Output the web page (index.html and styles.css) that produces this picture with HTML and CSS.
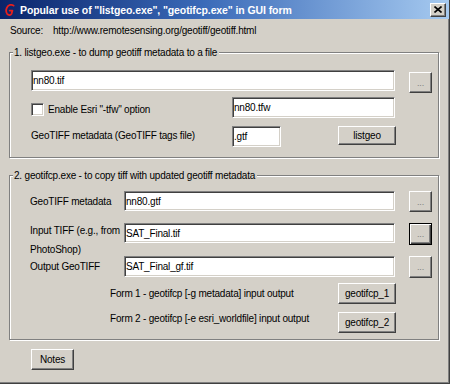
FILE: index.html
```html
<!DOCTYPE html>
<html lang="en">
<head>
  <meta charset="UTF-8">
  <title>Popular use of listgeo.exe, geotifcp.exe in GUI form</title>
  <link rel="stylesheet" href="styles.css">
</head>
<body>
  <div class="window">
    <div class="titlebar">
      <svg class="app-icon" viewBox="0 0 12 14">
        <path d="M10.5 2.2 C8.5 0.6 4.6 1.2 3 4.6 C1.6 7.6 2.4 11.6 5.2 12.4 C6.6 12.8 7.6 12.2 8.2 11.2 L9.2 7.6 L6.2 7.6" fill="none" stroke="#e8201c" stroke-width="2" stroke-linecap="round" stroke-linejoin="round"/>
      </svg>
      <span class="title">Popular use of "listgeo.exe", "geotifcp.exe" in GUI form</span>
      <button class="close-button">
        <svg class="close-icon" viewBox="0 0 8 7">
          <path d="M0.5 0.5 L7.5 6.5 M7.5 0.5 L0.5 6.5" stroke="#000" stroke-width="1.6"/>
        </svg>
      </button>
    </div>

    <div class="content">
      <div class="source">
        <span class="source-label">Source:</span>
        <span>http://www.remotesensing.org/geotiff/geotiff.html</span>
      </div>

      <!-- listgeo -->
      <fieldset class="group group-listgeo">
        <legend>1. listgeo.exe - to dump geotiff metadata to a file</legend>
        <div class="row row-file">
          <input class="field field-tif" type="text" value="nn80.tif">
          <button class="btn btn-browse">...</button>
        </div>
        <div class="row row-tfw">
          <label class="check">
            <span class="check-box"></span>
            <span>Enable Esri "-tfw" option</span>
          </label>
          <input class="field field-tfw" type="text" value="nn80.tfw">
        </div>
        <div class="row row-gtf">
          <span class="row-label">GeoTIFF metadata (GeoTIFF tags file)</span>
          <input class="field field-gtf" type="text" value=".gtf">
          <button class="btn btn-run">listgeo</button>
        </div>
      </fieldset>

      <!-- geotifcp -->
      <fieldset class="group group-geotifcp">
        <legend>2. geotifcp.exe - to copy tiff with updated geotiff metadata</legend>
        <div class="row row-path">
          <span class="path-label">GeoTIFF metadata</span>
          <input class="field field-path" type="text" value="nn80.gtf">
          <button class="btn btn-browse">...</button>
        </div>
        <div class="row row-path row-input">
          <span class="path-label path-label-two">Input TIFF (e.g., from PhotoShop)</span>
          <input class="field field-path" type="text" value="SAT_Final.tif">
          <button class="btn btn-browse btn-focus">...</button>
        </div>
        <div class="row row-path row-output">
          <span class="path-label">Output GeoTIFF</span>
          <input class="field field-path" type="text" value="SAT_Final_gf.tif">
          <button class="btn btn-browse">...</button>
        </div>
        <div class="row row-form">
          <span class="form-label">Form 1 - geotifcp [-g metadata] input output</span>
          <button class="btn btn-run">geotifcp_1</button>
        </div>
        <div class="row row-form row-form-last">
          <span class="form-label form-label-high">Form 2 - geotifcp [-e esri_worldfile] input output</span>
          <button class="btn btn-run">geotifcp_2</button>
        </div>
      </fieldset>

      <button class="btn btn-notes">Notes</button>
    </div>
  </div>
</body>
</html>
```

FILE: styles.css
```css
:root {
  --face: #d4d0c8;
  --shadow: #808080;
  --dark: #404040;
  --light: #ffffff;
}

* {
  box-sizing: border-box;
}

body {
  margin: 0;
  padding: 0;
  font-family: "Liberation Sans", Arial, sans-serif;
  font-size: 10px;
  letter-spacing: -0.2px;
  color: #000;
  background-color: var(--face);
}

.window {
  width: 450px;
  height: 384px;
  display: flex;
  flex-direction: column;
  background-color: var(--face);
  border-right: 1px solid var(--dark);
  border-bottom: 1px solid var(--dark);
  box-shadow: inset -1px -1px 0 var(--shadow);
  overflow: hidden;
}

/* Title bar */
.titlebar {
  height: 19px;
  flex-shrink: 0;
  display: flex;
  align-items: center;
  padding: 0 3px 0 4px;
  background: linear-gradient(to right, #0a246a 0%, #3a6ab8 45%, #a6caf0 100%);
}

.app-icon {
  width: 11px;
  height: 14px;
  flex-shrink: 0;
}

.title {
  margin-left: 5px;
  flex: 1;
  color: #fff;
  font-weight: bold;
  font-size: 10.5px;
  letter-spacing: -0.1px;
  white-space: nowrap;
}

.close-button {
  width: 16px;
  height: 14px;
  padding: 0;
  display: flex;
  align-items: center;
  justify-content: center;
  background-color: var(--face);
  border: 1px solid;
  border-color: var(--light) var(--dark) var(--dark) var(--light);
  box-shadow: inset -1px -1px 0 var(--shadow);
}

.close-icon {
  width: 8px;
  height: 7px;
}

/* Content */
.content {
  padding: 5px 0 0 0;
}

.source {
  height: 13px;
  line-height: 13px;
  padding-left: 10px;
  display: flex;
}

.source-label {
  width: 43px;
}

/* Group boxes */
.group {
  margin: 9px 0 0 9px;
  padding: 0;
  width: 430px;
  min-width: 0;
  border: 1px solid var(--shadow);
  box-shadow: 1px 1px 0 var(--light), inset 1px 1px 0 var(--light);
}

.group legend {
  margin-left: 3px;
  padding: 0 2px 0 1px;
  height: 13px;
  line-height: 13px;
  background-color: var(--face);
}

.group-listgeo {
  padding-top: 11px;
  padding-bottom: 10px;
}

.group-geotifcp {
  margin-top: 11px;
  padding-top: 9px;
  padding-bottom: 6px;
}

.row {
  display: flex;
  align-items: flex-start;
  padding-left: 21px;
}

/* Sunken text field */
.field {
  height: 21px;
  margin: 0;
  padding: 0 0 0 1px;
  font-family: inherit;
  font-size: 10px;
  letter-spacing: -0.2px;
  color: #000;
  background-color: #fff;
  border: 1px solid;
  border-color: var(--shadow) var(--light) var(--light) var(--shadow);
  box-shadow: inset 1px 1px 0 var(--dark), inset -1px -1px 0 var(--face);
  outline: none;
}

/* Raised push button */
.btn {
  margin: 0;
  padding: 0;
  font-family: inherit;
  font-size: 10px;
  letter-spacing: -0.2px;
  color: #000;
  background-color: var(--face);
  border: 1px solid;
  border-color: var(--light) var(--dark) var(--dark) var(--light);
  box-shadow: inset -1px -1px 0 var(--shadow);
}

.btn-browse {
  width: 23px;
  height: 21px;
  margin-left: 14px;
  margin-top: 2px;
  color: #808080;
  font-size: 9px;
}

.btn-focus {
  border: 1px solid #000;
  box-shadow: inset 1px 1px 0 var(--light), inset -1px -1px 0 var(--dark), inset -2px -2px 0 var(--shadow);
  height: 22px;
}

.btn-run {
  width: 58px;
  height: 20px;
}

/* listgeo rows */
.row-file {
  height: 27px;
}

.field-tif {
  width: 364px;
}

.row-tfw {
  height: 29px;
}

.check {
  width: 201px;
  margin-top: 6px;
  display: flex;
  align-items: center;
  gap: 4px;
  line-height: 13px;
}

.check-box {
  width: 13px;
  height: 13px;
  flex-shrink: 0;
  background-color: #fff;
  border: 1px solid;
  border-color: var(--shadow) var(--light) var(--light) var(--shadow);
  box-shadow: inset 1px 1px 0 var(--dark), inset -1px -1px 0 var(--face);
}

.field-tfw {
  width: 163px;
}

.row-label {
  width: 201px;
  line-height: 13px;
  margin-top: 3px;
}

.field-gtf {
  width: 49px;
}

.row-gtf .btn-run {
  margin-left: 57px;
  height: 19px;
}

/* geotifcp rows */
.row-path {
  height: 32px;
  padding-left: 20px;
}

.row-input {
  height: 33px;
}

.row-output {
  height: 27px;
}

.path-label {
  width: 94px;
  line-height: 13px;
  margin-top: 4px;
}

.path-label-two {
  margin-top: -2px;
  line-height: 19px;
}

.field-path {
  width: 271px;
  height: 20px;
}

.row-path .btn-browse {
  margin-top: 0;
}

.row-output .field-path {
  height: 21px;
}

.row-output .btn-browse {
  height: 22px;
}

.row-form {
  height: 29px;
  padding-left: 100px;
}

.row-form-last {
  height: 21px;
}

.form-label {
  width: 228px;
  line-height: 13px;
  margin-top: 4px;
  white-space: nowrap;
}

.form-label-high {
  margin-top: 0;
}

.row-form .btn-run {
  height: 21px;
}

.btn-notes {
  width: 43px;
  height: 21px;
  margin: 9px 0 0 31px;
}
```
